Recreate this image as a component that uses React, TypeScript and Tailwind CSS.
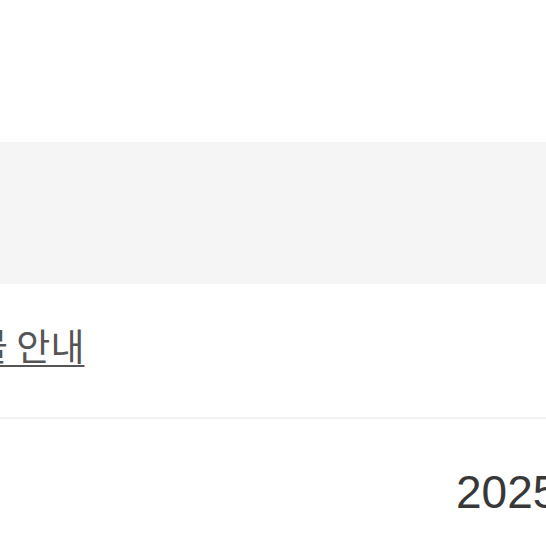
export default function App() {
  return (
    <div className="w-[546px] h-[546px] overflow-hidden bg-white relative" style={{ fontFamily: '"Liberation Sans", "Noto Sans CJK KR", sans-serif' }}>
      <div className="h-[142px]" />
      <div className="h-[142px] bg-[#f5f5f5]" />
      <div className="h-[133px] pt-[38px]">
        <a className="block ml-[-60px] whitespace-nowrap text-[37px] leading-[46px] text-[#555555] underline underline-offset-[4px] decoration-[2px]" style={{ fontFamily: '"Noto Sans CJK KR", sans-serif' }}>
          환불 안내
        </a>
      </div>
      <div className="h-[2px] bg-[#f2f2f2]" />
      <div className="pl-[456px] pt-[49px] whitespace-nowrap text-[46px] leading-[48px] text-[#383838]">
        2025
      </div>
    </div>
  );
}
